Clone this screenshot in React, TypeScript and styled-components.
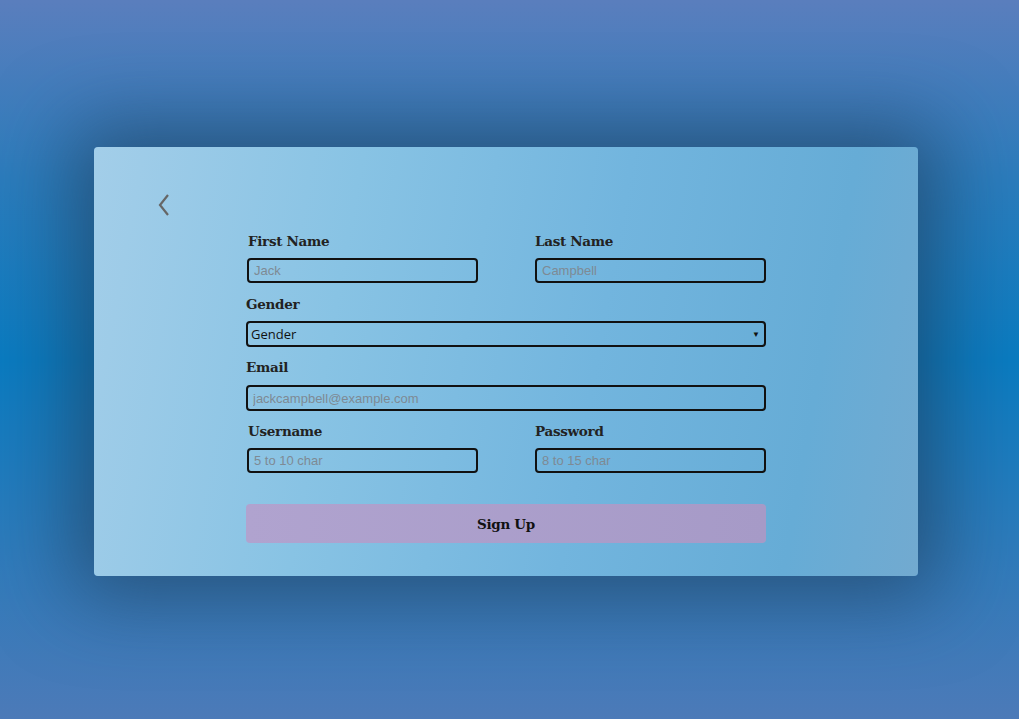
import React from "react";
import styled, { createGlobalStyle } from "styled-components";

const GlobalStyle = createGlobalStyle`
  html, body { margin: 0; padding: 0; }
  body {
    font-family: "Liberation Sans", Arial, sans-serif;
    background: linear-gradient(180deg, #5a7ebd 0%, #2b7cbc 25%, #0a7bc0 50%, #2c7bbb 75%, #4c7ab8 100%);
    min-height: 100vh;
  }
`;

const Page = styled.div`
  min-height: 719px;
  display: flex;
  align-items: center;
  justify-content: center;
  padding: 4px 7px 0 0;
  box-sizing: border-box;
`;

const Card = styled.div`
  width: 824px;
  height: 429px;
  box-sizing: border-box;
  border-radius: 4px;
  background: linear-gradient(100deg, #a3cee9 0%, #88c3e4 30%, #72b5de 60%, #66acd6 85%, #72aad0 100%);
  box-shadow: 0 0 80px 20px rgba(35, 55, 80, 0.6);
  padding: 46px 0 0;
  display: flex;
  flex-direction: column;
`;

const BackButton = styled.button`
  align-self: flex-start;
  margin-left: 62px;
  width: 16px;
  height: 24px;
  padding: 0;
  border: none;
  background: transparent;
  cursor: pointer;
  display: flex;
  align-items: center;
  justify-content: center;
`;

const Form = styled.form`
  width: 520px;
  margin: 15px auto 0;
  display: flex;
  flex-direction: column;
`;

const HalfRow = styled.div<{ $gap?: number }>`
  display: grid;
  grid-template-columns: 231px 231px;
  column-gap: 57px;
  padding-left: 1px;
  margin-bottom: ${(p) => p.$gap ?? 0}px;
`;

const Field = styled.div<{ $gap?: number }>`
  display: flex;
  flex-direction: column;
  margin-bottom: ${(p) => p.$gap ?? 0}px;
`;

const Label = styled.label<{ $indent?: number; $space?: number }>`
  font-family: "DejaVu Serif", "Liberation Serif", serif;
  font-weight: bold;
  font-size: 13.5px;
  line-height: 18px;
  color: #222;
  padding-left: ${(p) => p.$indent ?? 0}px;
  margin-bottom: ${(p) => p.$space ?? 8}px;
  letter-spacing: -0.3px;
`;

const Input = styled.input<{ $h?: number }>`
  box-sizing: border-box;
  height: ${(p) => p.$h ?? 25}px;
  width: 100%;
  border: 2px solid #111;
  border-radius: 4px;
  background: transparent;
  padding: 0 5px;
  font-family: "Liberation Sans", Arial, sans-serif;
  font-size: 13px;
  color: #222;
  outline: none;
  &::placeholder { color: #7e8a94; }
`;

const SelectWrap = styled.div`
  position: relative;
`;

const Select = styled.select`
  appearance: none;
  -webkit-appearance: none;
  box-sizing: border-box;
  height: 26px;
  width: 100%;
  border: 2px solid #111;
  border-radius: 4px;
  background: transparent;
  padding: 0 3px;
  font-family: "Open Sans", "Noto Sans", sans-serif;
  font-size: 13px;
  color: #111;
  outline: none;
`;

const Arrow = styled.span`
  position: absolute;
  right: 6px;
  top: 50%;
  transform: translateY(-50%);
  font-size: 8px;
  color: #111;
  pointer-events: none;
`;

const SubmitButton = styled.button`
  margin-top: 31px;
  height: 39px;
  width: 100%;
  border: none;
  border-radius: 4px;
  background: linear-gradient(90deg, #b0a3cf, #a69ac7);
  font-family: "DejaVu Serif", "Liberation Serif", serif;
  font-weight: bold;
  font-size: 13.5px;
  color: #111;
  letter-spacing: -0.3px;
  cursor: pointer;
`;

export default function App() {
  return (
    <>
      <GlobalStyle />
      <Page>
        <Card>
          <BackButton type="button" aria-label="Back">
            <svg width="14" height="24" viewBox="0 0 14 24">
              <polyline points="11,2 3,12 11,22" fill="none" stroke="#666" strokeWidth="2.2" strokeLinejoin="miter" />
            </svg>
          </BackButton>
          <Form onSubmit={(e) => e.preventDefault()}>
            <HalfRow $gap={12}>
              <Field>
                <Label $indent={1}>First Name</Label>
                <Input placeholder="Jack" />
              </Field>
              <Field>
                <Label>Last Name</Label>
                <Input placeholder="Campbell" />
              </Field>
            </HalfRow>
            <Field $gap={11}>
              <Label>Gender</Label>
              <SelectWrap>
                <Select defaultValue="">
                  <option value="">Gender</option>
                  <option value="m">Male</option>
                  <option value="f">Female</option>
                </Select>
                <Arrow>▼</Arrow>
              </SelectWrap>
            </Field>
            <Field $gap={11}>
              <Label $space={9}>Email</Label>
              <Input $h={26} placeholder="jackcampbell@example.com" />
            </Field>
            <HalfRow>
              <Field>
                <Label $indent={1}>Username</Label>
                <Input placeholder="5 to 10 char" />
              </Field>
              <Field>
                <Label>Password</Label>
                <Input type="password" placeholder="8 to 15 char" />
              </Field>
            </HalfRow>
            <SubmitButton type="submit">Sign Up</SubmitButton>
          </Form>
        </Card>
      </Page>
    </>
  );
}
